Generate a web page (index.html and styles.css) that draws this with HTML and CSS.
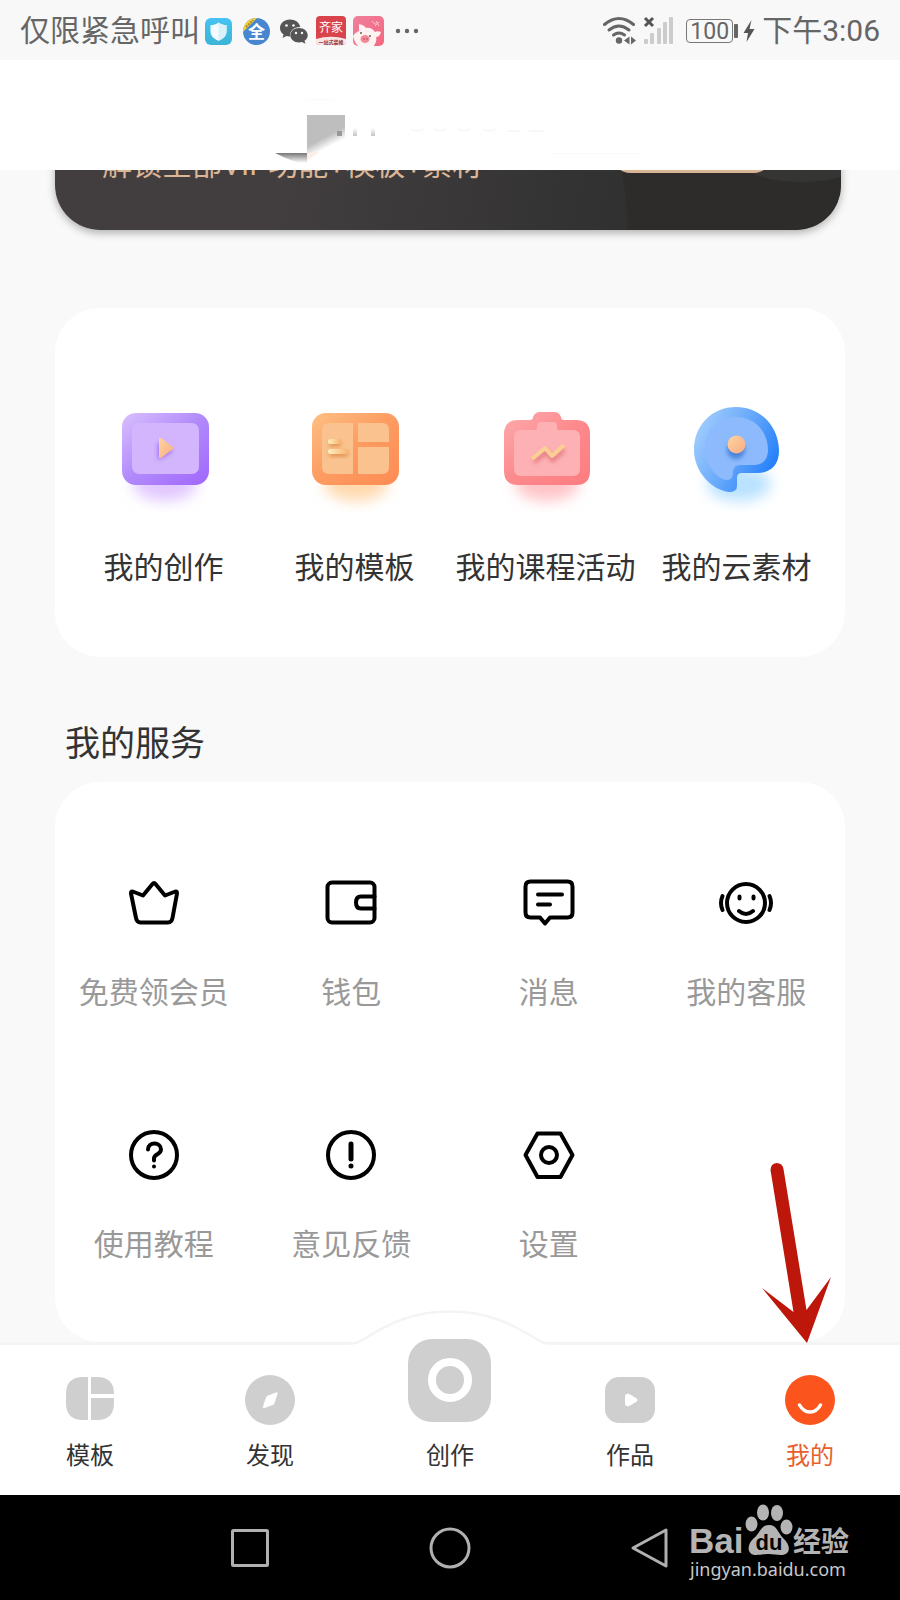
FILE: index.html
```html
<!DOCTYPE html>
<html lang="zh-CN">
<head>
<meta charset="utf-8">
<meta name="viewport" content="width=device-width, initial-scale=1">
<title>我的</title>
<link rel="stylesheet" href="styles.css">
</head>
<body>
<div class="page">
  <div class="status">
    <div class="status-left">
      <span class="carrier">仅限紧急呼叫</span>
      <svg class="status-apps" width="216" height="36" viewBox="203 12 216 36" aria-hidden="true">
        <defs>
          <linearGradient id="sky" x1="0" y1="0" x2="0" y2="1"><stop offset="0" stop-color="#45c3f3"/><stop offset="1" stop-color="#3db4d6"/></linearGradient>
          <linearGradient id="pinkTile" x1="0" y1="0" x2="1" y2="1"><stop offset="0" stop-color="#f07f9b"/><stop offset="1" stop-color="#f4677f"/></linearGradient>
          <clipPath id="disc"><circle cx="256.500" cy="30.500" r="13.500"/></clipPath>
          <clipPath id="pigTile"><rect x="353" y="15" width="31" height="30" rx="5"/></clipPath>
        </defs>
        <rect x="205" y="17" width="27" height="27" rx="6" fill="url(#sky)"/>
        <path d="M218.500 21.500c2.500 2 5 2.700 8 2.800v6c0 4.500-3 7.500-8 9.500-5-2-8-5-8-9.500v-6c3-.1 5.500-.8 8-2.800z" fill="#f4fbfe"/>
        <path d="M218.500 21.500c2.500 2 5 2.700 8 2.800v6c0 4.500-3 7.500-8 9.500z" fill="#d9f1f9"/>
        <g clip-path="url(#disc)"><rect x="243" y="17" width="27" height="27" fill="#4787cf"/><path d="M240 34l21-21h-21z" fill="#f3d13c"/><path d="M246 26l7-7" stroke="#b88a20" stroke-width="2" stroke-dasharray="2 1"/></g>
        <text x="256.500" y="37" class="app-all">全</text>
        <path d="M290 18.500c-5.800 0-10 3.700-10 8.500 0 2.700 1.300 5 3.600 6.500L282.500 37l4-2c1.200.3 2.300.5 3.500.4-.6-5 3.500-9.400 10.300-9.300-.8-4.500-5-7.600-10.300-7.600z" fill="#555"/>
        <path d="M299 27c-5 0-8.700 3.200-8.700 7.200s3.700 7.200 8.700 7.200c1 0 2-.1 3-.4l3.500 1.800-1-3c2-1.300 3.200-3.300 3.200-5.600 0-4-3.700-7.200-8.700-7.200z" fill="#555"/>
        <g fill="#f8f8f8"><circle cx="286.500" cy="24.500" r="1.300"/><circle cx="293.500" cy="24.500" r="1.300"/><circle cx="296" cy="32" r="1.200"/><circle cx="302" cy="32" r="1.200"/></g>
        <rect x="316" y="15" width="30" height="29" rx="4" fill="#d8434c"/>
        <path d="M316 38q15-4.500 30 0v3q0 3-4 3h-22q-4 0-4-3z" fill="#f9e6e6"/>
        <text x="331" y="31" class="app-home">齐家</text>
        <text x="331" y="43" class="app-sub">一站式装修</text>
        <g clip-path="url(#pigTile)"><rect x="353" y="15" width="31" height="30" fill="url(#pinkTile)"/>
          <path d="M353 35c2-3 4-4 6-5l0-7c4 1 6 2 7 4 4-1 7 1 9 4 2-1 4-1 6 0-1 4-3 5-5 5 1 3 0 6-3 10h-14c-3-3-5-6-6-11z" fill="#fff2f2"/>
          <ellipse cx="365" cy="38" rx="4.500" ry="4" fill="#f28a96"/><path d="M364 37v2M367 37v2" stroke="#c65065"/><circle cx="361" cy="32" r="1" fill="#664"/><circle cx="370" cy="35" r="1" fill="#664"/>
          <path d="M372 20q3 5 6 2t-3 3M376 20l3 5" fill="none" stroke="#fbc6cf"/></g>
        <g fill="#666"><circle cx="398" cy="30" r="2.200"/><circle cx="407" cy="30" r="2.200"/><circle cx="416" cy="30" r="2.200"/></g>
      </svg>
    </div>
    <div class="status-right">
      <svg width="72" height="32" viewBox="603 14 72 32" fill="none" aria-hidden="true">
        <g stroke="#666" stroke-width="3" stroke-linecap="round"><path d="M605.500 23.500q14.500-12 29 0"/><path d="M610 29q10-8 20 0"/><path d="M614.500 34q5.500-4 11 0"/></g>
        <circle cx="620" cy="39.500" r="3.200" fill="#666"/>
        <path d="M630.500 35.500v8l-5.500-4zM632 35.500v8l5-4z" fill="#666"/>
        <path d="M646 17l8 8M654 17l-8 8" stroke="#555" stroke-width="3"/>
        <g fill="#ccc"><rect x="645" y="38" width="4" height="5" rx="1"/><rect x="651" y="32" width="4" height="11" rx="1"/><rect x="658" y="27" width="4" height="16" rx="1"/><rect x="664" y="21" width="4" height="22" rx="1"/><rect x="670" y="16" width="4" height="27" rx="1"/></g>
      </svg>
      <span class="battery">100</span>
      <svg class="bolt" width="12" height="24" viewBox="0 0 10 24" aria-hidden="true"><path d="M7.500 1L-.5 14h4.500L2.500 23 10.500 10H5.500z" fill="#555"/></svg>
      <span class="clock">下午3:06</span>
    </div>
  </div>

  <header class="topbar">
    <svg width="380" height="84" viewBox="260 86 380 84" aria-hidden="true">
      <defs>
        <linearGradient id="fade" gradientUnits="userSpaceOnUse" x1="320" y1="130" x2="329" y2="147"><stop offset=".45" stop-color="#bebebe"/><stop offset="1" stop-color="#fff"/></linearGradient>
        <linearGradient id="wedge" x1="0" y1="0" x2="0" y2="1"><stop offset="0" stop-color="#777"/><stop offset=".9" stop-color="#fff"/></linearGradient>
        <linearGradient id="drip" x1="0" y1="0" x2="0" y2="1"><stop offset="0" stop-color="#fff"/><stop offset="1" stop-color="#c4c4c4"/></linearGradient>
      </defs>
      <rect x="307" y="115" width="38" height="42" fill="url(#fade)"/>
      <path d="M275 153h32v11q-13-1-32-11z" fill="url(#wedge)"/>
      <path d="M307 153l12-1-12 9z" fill="#fdeee6"/>
      <rect x="337" y="131" width="5" height="5" fill="#999"/>
      <g fill="url(#drip)"><rect x="353" y="128" width="4" height="8"/><rect x="371" y="128" width="4" height="8"/></g>
      <g fill="none" stroke="#f8f8f8" stroke-width="2"><path d="M411 129q6 4 12 0M434 129q6 4 12 0M458 129q6 4 12 0M483 129q6 4 12 0M507 131h12M529 131h15"/></g>
      <path d="M552 153.500h96M305 99.500h30" stroke="#fafafa"/>
    </svg>
  </header>

  <main class="content">
    <section class="vip">
      <svg class="vip-art" width="241" height="130" viewBox="600 100 241 130" aria-hidden="true">
        <path d="M600 100q28 65 27 130h214V100z" fill="#2d2c2a"/>
        <path d="M740 165q20 17 60 17 25 0 41-5V100H740z" fill="#353534"/>
        <rect x="610" y="130" width="164" height="43" rx="21" fill="#d9b493"/>
      </svg>
      <p class="vip-text">解锁全部VIP功能+模板+素材</p>
    </section>

    <nav class="card mine" aria-label="我的内容">
      <a class="mine-item" href="#create">
        <svg width="120" height="110" viewBox="103 403 120 110" aria-hidden="true">
          <defs>
            <filter id="blur" x="-60%" y="-100%" width="220%" height="300%"><feGaussianBlur stdDeviation="7"/></filter>
            <filter id="soft" x="-50%" y="-50%" width="200%" height="200%"><feGaussianBlur stdDeviation="2"/></filter>
            <linearGradient id="violet" x1="0" y1="0" x2="1" y2="1"><stop offset="0" stop-color="#d9c0fc"/><stop offset=".5" stop-color="#b189fb"/><stop offset="1" stop-color="#a067fc"/></linearGradient>
            <linearGradient id="gold" x1="0" y1="0" x2="1" y2="1"><stop offset="0" stop-color="#ffd4a0"/><stop offset="1" stop-color="#f6ab84"/></linearGradient>
          </defs>
          <ellipse cx="164" cy="484" rx="32" ry="17" fill="#e2c8ff" filter="url(#blur)"/>
          <rect x="121" y="413" width="87" height="72" rx="14" fill="url(#violet)"/>
          <rect x="131" y="423" width="67" height="51" rx="7" fill="#d2b5fc"/>
          <path d="M157 442l15 9-15 9z" fill="#9b68e8" filter="url(#soft)"/>
          <path d="M158 439q0-2 2-1l12 9q1.500 1 0 2l-12 9q-2 1-2-1z" fill="url(#gold)"/>
        </svg>
        <span>我的创作</span>
      </a>
      <a class="mine-item" href="#templates">
        <svg width="120" height="110" viewBox="295 403 120 110" aria-hidden="true">
          <defs><linearGradient id="orange" x1="0" y1="0" x2="1" y2="1"><stop offset="0" stop-color="#fec083"/><stop offset=".5" stop-color="#fd9b60"/><stop offset="1" stop-color="#fd8c54"/></linearGradient>
          <linearGradient id="bar" x1="0" y1="0" x2="1" y2="0"><stop offset="0" stop-color="#fff0bf"/><stop offset="1" stop-color="#f6b06c"/></linearGradient></defs>
          <ellipse cx="356" cy="484" rx="32" ry="17" fill="#ffd9ae" filter="url(#blur)"/>
          <rect x="312" y="413" width="87" height="72" rx="14" fill="url(#orange)"/>
          <path d="M329 423h24v51h-24q-7 0-7-7v-37q0-7 7-7zM358 423h24q7 0 7 7v12h-31zM358 447h31v20q0 7-7 7h-24z" fill="#f9c28e"/>
          <path d="M331 444h8M331 454h15" stroke="#dd8540" stroke-width="4" stroke-linecap="round" filter="url(#soft)"/>
          <rect x="328" y="439" width="13" height="5" rx="2.500" fill="url(#bar)"/><rect x="328" y="449" width="21" height="5" rx="2.500" fill="url(#bar)"/>
        </svg>
        <span>我的模板</span>
      </a>
      <a class="mine-item" href="#courses">
        <svg width="120" height="110" viewBox="486 403 120 110" aria-hidden="true">
          <defs><linearGradient id="rose" x1="0" y1="0" x2="1" y2="1"><stop offset="0" stop-color="#feabad"/><stop offset=".5" stop-color="#fc8a8d"/><stop offset="1" stop-color="#fd7c80"/></linearGradient></defs>
          <ellipse cx="547" cy="484" rx="32" ry="17" fill="#ffc4c8" filter="url(#blur)"/>
          <path d="M518 420h12q3 0 3-3 2-5 7-5h14q5 0 7 5 0 3 3 3h12q14 0 14 14v37q0 14-14 14h-58q-14 0-14-14v-37q0-14 14-14z" fill="url(#rose)"/>
          <path d="M521 430h14q2 0 2-2v-2q0-4 4-4h12q4 0 4 4v2q0 2 2 2h14q7 0 7 7v32q0 7-7 7h-52q-7 0-7-7v-32q0-7 7-7z" fill="#fdb1b4"/>
          <path d="M534 462l12-10 7 8 11-10" fill="none" stroke="#e3777b" stroke-width="4" filter="url(#soft)"/>
          <path d="M532 459l13-11 7 8 12-11" fill="none" stroke="#fbce94" stroke-width="4" stroke-linejoin="round"/>
        </svg>
        <span>我的课程活动</span>
      </a>
      <a class="mine-item" href="#cloud">
        <svg width="120" height="110" viewBox="676 403 120 110" aria-hidden="true">
          <defs><linearGradient id="blue" x1="0" y1=".2" x2="1" y2=".7"><stop offset="0" stop-color="#a5cffd"/><stop offset=".5" stop-color="#68a9fa"/><stop offset="1" stop-color="#1e7bfb"/></linearGradient></defs>
          <ellipse cx="738" cy="484" rx="32" ry="17" fill="#b9e2ff" filter="url(#blur)"/>
          <path d="M735 407c26 0 43 21 43 44 0 14-9 22-21 22h-16q-5 0-5 5v8q0 6-8 6c-17-2-35-20-35-42 0-25 18-43 42-43z" fill="url(#blue)"/>
          <path d="M735 417c19 0 32 15 32 33 0 10-6 15-14 15h-14q-6 0-7 6c0 7-2 9-7 9-10-2-21-16-21-31 0-19 14-32 31-32z" fill="#8cbafc"/>
          <circle cx="735" cy="450" r="9" fill="#4c83dc" filter="url(#soft)"/><circle cx="735.500" cy="444.500" r="9" fill="url(#gold)"/>
        </svg>
        <span>我的云素材</span>
      </a>
    </nav>

    <h2 class="section-title">我的服务</h2>

    <nav class="card services" aria-label="我的服务">
      <a class="service" href="#member">
        <svg width="60" height="60" viewBox="0 0 60 60" aria-hidden="true"><path d="M7 20.500q-.4-3 3-1.500l9 3.500L28.500 11q1.500-1.800 3 0L41 22.500l9-3.500q3.400-1.500 3 1.500L48.500 45q-.8 4.500-4.500 4.500H16.500q-3.700 0-4.500-4.500z"/></svg>
        <span>免费领会员</span>
      </a>
      <a class="service" href="#wallet">
        <svg width="60" height="60" viewBox="0 0 60 60" aria-hidden="true"><rect x="6.500" y="9.500" width="47" height="40" rx="4.500"/><path d="M53.500 23.500H40q-5 0-5 6t5 6h13.500"/></svg>
        <span>钱包</span>
      </a>
      <a class="service" href="#messages">
        <svg width="60" height="60" viewBox="0 0 60 60" aria-hidden="true"><path d="M11.500 8.500h37q5 0 5 5v26q0 5-5 5H31l-5 6-5-6h-9.500q-5 0-5-5v-26q0-5 5-5zM19 21.500h24M19 31.500h12"/></svg>
        <span>消息</span>
      </a>
      <a class="service" href="#support">
        <svg width="60" height="60" viewBox="0 0 60 60" aria-hidden="true"><circle cx="30" cy="30" r="19"/><path d="M23.500 23.500v2M37.500 23.500v2M23 38q7 6 14 0M6.500 23q-3 7 0 14M53.500 23q3 7 0 14"/></svg>
        <span>我的客服</span>
      </a>
      <a class="service" href="#guide">
        <svg width="60" height="60" viewBox="0 0 60 60" aria-hidden="true"><circle cx="30" cy="30" r="23"/><path d="M24 24.500c0-4 3-6 6.500-6s6.500 2.500 6.500 6c0 5-7 4.500-7 9v2M30 41.500v.1"/></svg>
        <span>使用教程</span>
      </a>
      <a class="service" href="#feedback">
        <svg width="60" height="60" viewBox="0 0 60 60" aria-hidden="true"><circle cx="30" cy="30" r="23"/><path d="M30 19v15M30 41v.1" stroke-width="5"/></svg>
        <span>意见反馈</span>
      </a>
      <a class="service" href="#settings">
        <svg width="60" height="60" viewBox="0 0 60 60" aria-hidden="true"><path d="M18.500 8.500h23L53.500 30l-12 22h-23L6.500 30z"/><circle cx="30" cy="30" r="8"/></svg>
        <span>设置</span>
      </a>
    </nav>
  </main>

  <nav class="tabbar" aria-label="主导航">
    <svg class="hump" width="210" height="38" viewBox="345 1310 210 38" aria-hidden="true"><path d="M345 1343.500h6q6 0 12-4c29-18 52-28 87-28s58 10 87 28q6 4 12 4h6v5H345z" fill="#fff"/><path d="M345 1343.500h6q6 0 12-4c29-18 52-28 87-28s58 10 87 28q6 4 12 4h6" fill="none" stroke="#f4f4f4" stroke-width="2.500"/></svg>
    <a class="tab" href="#tpl">
      <svg width="50" height="50" viewBox="0 0 50 50" aria-hidden="true"><path d="M18 2h5v43h-5Q1 45 1 28V19Q1 2 18 2zM26 2h6q17 0 17 17H26zM26 23h23v5q0 17-17 17h-6z" fill="#cfcfcf"/></svg>
      <span>模板</span>
    </a>
    <a class="tab" href="#discover">
      <svg width="50" height="50" viewBox="0 0 50 50" aria-hidden="true"><circle cx="25" cy="25" r="25" fill="#cfcfcf"/><path d="M31 17.500q2-.6 1.500 1.500l-3 9q-.5 1.300-2 2l-8 3q-2 .5-1.500-1.500l3-9q.5-1.300 2-2z" fill="#fff"/></svg>
      <span>发现</span>
    </a>
    <a class="tab" href="#new">
      <svg class="tab-main" width="84" height="84" viewBox="0 0 84 84" aria-hidden="true"><rect y="1" width="83" height="83" rx="24" fill="#cfcfcf"/><circle cx="42" cy="42" r="18" fill="none" stroke="#fff" stroke-width="8"/></svg>
      <span>创作</span>
    </a>
    <a class="tab" href="#works">
      <svg width="50" height="50" viewBox="0 0 50 50" aria-hidden="true"><rect y="2" width="50" height="46" rx="14" fill="#cfcfcf"/><path d="M20 22c0-4 3-4 6-2l5 3q3 2 0 4l-5 3c-3 2-6 2-6-2z" fill="#fff"/></svg>
      <span>作品</span>
    </a>
    <a class="tab active" href="#me" aria-current="page">
      <svg width="50" height="50" viewBox="0 0 50 50" aria-hidden="true"><circle cx="25" cy="25" r="25" fill="#fb541c"/><path d="M14.500 30q4 7 10.500 7t10.500-7" fill="none" stroke="#fff" stroke-width="3.500" stroke-linecap="round"/></svg>
      <span>我的</span>
    </a>
    <svg class="pointer" width="72" height="182" viewBox="761 1162 72 182" aria-hidden="true"><path d="M770.500 1170q0-6 6-7 6 0 7 6l23 141 24.500-33-24 66-45-55 31.500 24z" fill="#bd170b"/></svg>
  </nav>

  <div class="sysbar">
    <button class="sys" type="button" aria-label="最近任务"><svg width="44" height="44" viewBox="0 0 44 44"><rect x="4.500" y="4.500" width="35" height="35" rx="1"/></svg></button>
    <button class="sys" type="button" aria-label="主屏幕"><svg width="44" height="44" viewBox="0 0 44 44"><circle cx="22" cy="22" r="19"/></svg></button>
    <button class="sys" type="button" aria-label="返回"><svg width="44" height="44" viewBox="0 0 44 44"><path d="M38 4v36L5 22z" stroke-linejoin="round"/></svg></button>
    <svg class="watermark" width="164" height="84" viewBox="689 1502 164 84" role="img" aria-label="Baidu 经验">
      <g fill="#b4b4b4"><ellipse cx="751.500" cy="1524" rx="6" ry="7.500"/><ellipse cx="763" cy="1512.500" rx="6" ry="8"/><ellipse cx="777" cy="1513" rx="6" ry="8"/><ellipse cx="786.500" cy="1527" rx="6" ry="7.500"/>
      <path d="M769 1525c8 0 9 8 14 13 9 8 7 17-2 17-5 0-7-1-12-1s-8 1-13 1c-9 0-10-10-2-17 6-5 7-13 15-13z"/></g>
      <text x="689" y="1553" class="wm-bai">Bai</text>
      <text x="769" y="1550" class="wm-du">du</text>
      <text x="793" y="1552" class="wm-cn">经验</text>
      <text x="690" y="1576" class="wm-url">jingyan.baidu.com</text>
    </svg>
  </div>
</div>
</body>
</html>
```
FILE: styles.css
```css
* {
  box-sizing: border-box;
}

body {
  margin: 0;
  background: #f9f9f9;
  color: #333;
  font-family: Roboto, "Noto Sans CJK SC", sans-serif;
}

.page {
  display: flex;
  flex-direction: column;
  min-height: 100vh;
}

svg {
  display: block;
  flex: none;
}

a {
  color: inherit;
  text-decoration: none;
}

/* Status bar */
.status {
  display: flex;
  justify-content: space-between;
  align-items: center;
  height: 60px;
  padding: 2px 20px 0;
  background: #f8f8f8;
  color: #666;
  font-size: 30px;
  line-height: 40px;
}

.status-left,
.status-right {
  display: flex;
  align-items: center;
}

.carrier {
  white-space: nowrap;
}

.status-apps {
  margin-left: 3px;
}

.app-all,
.app-home,
.app-sub {
  font-family: "Noto Sans CJK SC", sans-serif;
  text-anchor: middle;
  fill: #fff;
}

.app-all {
  font-size: 17px;
  font-weight: 700;
}

.app-home {
  font-size: 12px;
}

.app-sub {
  font-size: 5px;
  font-weight: 700;
  fill: #8c2530;
}

.battery {
  position: relative;
  height: 24px;
  margin-left: 12px;
  padding: 0 3px;
  border: 1px solid #777;
  border-radius: 4px;
  font-size: 23px;
  line-height: 23px;
}

.battery::after {
  content: "";
  position: absolute;
  top: 4px;
  right: -6px;
  width: 4px;
  height: 14px;
  border-radius: 1px;
  background: #666;
}

.bolt {
  margin: 0 7px 0 10px;
}

.clock {
  white-space: nowrap;
}

/* Header */
.topbar {
  position: relative;
  z-index: 1;
  display: flex;
  justify-content: center;
  align-items: flex-end;
  height: 110px;
  background: #fff;
}

.content {
  flex: 1;
  padding: 0 55px;
}

/* Membership banner, scrolled partly under the header */
.vip {
  position: relative;
  display: flex;
  align-items: flex-end;
  height: 130px;
  margin: -70px 4px 0 0;
  padding: 0 47px 45px;
  overflow: hidden;
  border-radius: 45px;
  background: linear-gradient(100deg, #423e3f 30%, #303030 75%);
  box-shadow: 0 3px 8px rgba(0, 0, 0, 0.3);
  color: #dcb595;
}

.vip-art {
  position: absolute;
  right: 0;
  bottom: 0;
}

.vip-text {
  margin: 0;
  font-size: 30px;
  line-height: 40px;
  white-space: nowrap;
}

/* Cards */
.card {
  display: grid;
  grid-template-columns: repeat(4, minmax(0, 1fr));
  border-radius: 45px;
  background: #fff;
}

.mine {
  margin-top: 78px;
  padding: 95px 13px 69px;
}

.mine-item,
.service {
  display: flex;
  flex-direction: column;
  align-items: center;
  font-size: 30px;
  line-height: 40px;
  white-space: nowrap;
}

.mine-item {
  gap: 35px;
}

.section-title {
  margin: 64px 0 13px;
  padding-left: 10px;
  font-size: 35px;
  font-weight: 400;
  line-height: 48px;
}

.services {
  row-gap: 112px;
  padding: 91px 0 77px;
}

.service {
  gap: 40px;
  color: #999;
}

.service svg {
  fill: none;
  stroke: #000;
  stroke-width: 4;
  stroke-linecap: round;
  stroke-linejoin: round;
}

/* Bottom tabs */
.tabbar {
  position: relative;
  display: grid;
  grid-template-columns: repeat(5, 1fr);
  padding: 30px 0 23px;
  border-top: 3px solid #f4f4f4;
  background: #fff;
}

.hump {
  position: absolute;
  top: -35px;
  left: 50%;
  margin-left: -105px;
}

.tab {
  position: relative;
  display: flex;
  flex-direction: column;
  align-items: center;
  gap: 15px;
  font-size: 24px;
  line-height: 32px;
}

.tab-main {
  margin: -37px 0 3px;
}

.active {
  color: #e8602c;
}

.pointer {
  position: absolute;
  right: 67px;
  bottom: 151px;
}

/* System navigation */
.sysbar {
  position: relative;
  display: flex;
  justify-content: center;
  align-items: center;
  gap: 156px;
  height: 105px;
  background: #000;
}

.sys {
  padding: 0;
  border: 0;
  background: none;
}

.sys svg {
  fill: none;
  stroke: #b0b0b0;
  stroke-width: 3;
}

.watermark {
  position: absolute;
  right: 47px;
  bottom: 14px;
}

.wm-bai,
.wm-du {
  font-family: "Liberation Sans", sans-serif;
  font-weight: 700;
}

.wm-bai {
  font-size: 35px;
  fill: #b4b4b4;
}

.wm-du {
  font-size: 22px;
  text-anchor: middle;
  fill: #000;
}

.wm-cn {
  font-family: "Noto Sans CJK SC", sans-serif;
  font-size: 28px;
  font-weight: 700;
  fill: #b4b4b4;
}

.wm-url {
  font-family: "Noto Sans", sans-serif;
  font-size: 18px;
  fill: #c8c8c8;
}
```
